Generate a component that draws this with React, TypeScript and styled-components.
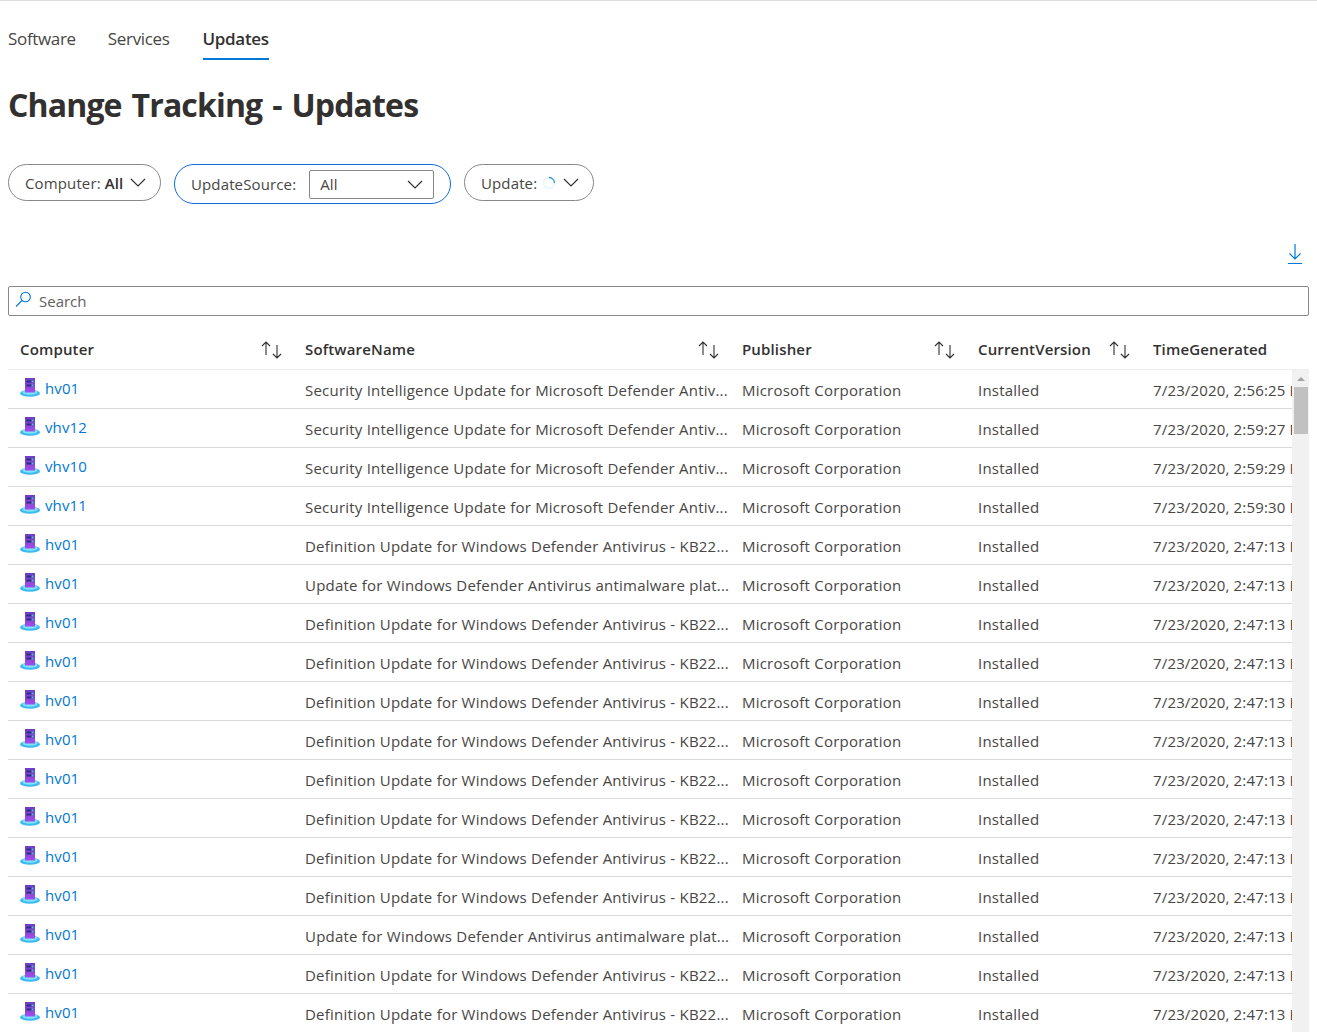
import styled, { createGlobalStyle } from "styled-components";

const GlobalStyle = createGlobalStyle`
  html, body {
    margin: 0;
    padding: 0;
    height: 100%;
    overflow: hidden;
    background: #fff;
  }
  body {
    font-family: "Open Sans", "Noto Sans", sans-serif;
    color: #323130;
  }
`;

const Page = styled.div`
  height: 1032px;
  overflow: hidden;
  box-sizing: border-box;
  border-top: 1px solid #dcdcdc;
  padding: 0 8px;
  display: flex;
  flex-direction: column;
`;

const Tabs = styled.nav`
  display: flex;
  gap: 32px;
  height: 59px;
  box-sizing: border-box;
`;

const Tab = styled.div<{ $active?: boolean }>`
  box-sizing: border-box;
  height: 59px;
  padding-top: 26px;
  margin-left: ${(p) => (p.$active ? "1px" : "0")};
  font-size: 17px;
  line-height: 24px;
  letter-spacing: -0.33px;
  color: ${(p) => (p.$active ? "#323130" : "#484644")};
  font-weight: ${(p) => (p.$active ? 560 : 400)};
  border-bottom: ${(p) => (p.$active ? "2px solid #0078d4" : "none")};
`;

const Title = styled.h1`
  margin: 23px 0 0;
  font-size: 32px;
  line-height: 44px;
  font-weight: 700;
  letter-spacing: -0.85px;
  word-spacing: 2.4px;
  color: #323130;
`;

const Filters = styled.div`
  display: flex;
  align-items: flex-start;
  gap: 13px;
  margin-top: 37px;
`;

const Pill = styled.div<{ $focused?: boolean; $width: number }>`
  box-sizing: border-box;
  display: flex;
  align-items: center;
  width: ${(p) => p.$width}px;
  height: ${(p) => (p.$focused ? 40 : 37)}px;
  padding-left: 16px;
  border-radius: 20px;
  border: 1px solid ${(p) => (p.$focused ? "#0f6cd6" : "#8a8886")};
  font-size: 15px;
  letter-spacing: 0.13px;
  color: #484644;
`;

const PillValue = styled.b`
  margin-left: 4px;
  font-weight: 600;
  color: #323130;
`;

const PillChevron = styled.svg`
  margin-left: 7px;
  flex: none;
`;

const LoadingSpinner = styled.svg`
  margin-left: 5px;
  flex: none;
`;

const InnerSelect = styled.div`
  box-sizing: border-box;
  display: flex;
  align-items: center;
  justify-content: space-between;
  width: 125px;
  height: 29px;
  margin-left: 13px;
  padding: 0 10px 0 10px;
  border: 1px solid #8a8886;
  border-radius: 2px;
  color: #484644;
`;

const ToolRow = styled.div`
  display: flex;
  justify-content: flex-end;
  height: 24px;
  margin-top: 39px;
  padding-right: 6px;
`;

const SearchBox = styled.div`
  box-sizing: border-box;
  display: flex;
  align-items: center;
  gap: 7px;
  height: 30px;
  margin-top: 19px;
  padding-left: 6px;
  border: 1px solid #8a8886;
  border-radius: 2px;
  font-size: 15px;
  color: #605e5c;
`;

const SearchIcon = styled.svg`
  margin-top: -3px;
  flex: none;
`;

const TableArea = styled.div`
  display: grid;
  grid-template-columns: 1284px 17px;
  grid-template-rows: 54px 1fr;
  flex: 1;
  min-height: 0;
`;

const columns = "285px 437px 236px 175px 151px";

const HeaderRow = styled.div`
  grid-column: 1 / 3;
  display: grid;
  grid-template-columns: ${columns};
  box-sizing: border-box;
  height: 54px;
  padding-top: 13px;
  align-items: center;
  border-bottom: 1px solid #eeeeee;
`;

const HeaderCell = styled.div`
  display: flex;
  align-items: center;
  justify-content: space-between;
  padding: 0 10px 0 12px;
  font-size: 15px;
  font-weight: 560;
  letter-spacing: 0.15px;
  color: #323130;
`;

const SortGlyph = styled.svg`
  margin-top: 1px;
  flex: none;
`;

const Rows = styled.div`
  overflow: hidden;
`;

const Row = styled.div`
  display: grid;
  grid-template-columns: ${columns};
  box-sizing: border-box;
  height: 39px;
  border-bottom: 1px solid #d9d9d9;
  font-size: 15px;
  letter-spacing: 0.22px;
  color: #484644;
`;

const Cell = styled.div`
  padding: 2px 0 0 12px;
  line-height: 37px;
  white-space: nowrap;
  overflow: hidden;
`;

const TimeCell = styled(Cell)`
  letter-spacing: 0.16px;
`;

const ComputerCell = styled.div`
  display: flex;
  align-items: flex-start;
  gap: 5px;
  padding: 5px 0 0 12px;
  font-size: 15px;
  letter-spacing: 0.1px;
  line-height: 26px;
  color: #0078d4;
`;

const ServerGlyph = styled.svg`
  margin-top: 3px;
  flex: none;
`;

const Scrollbar = styled.div`
  display: flex;
  flex-direction: column;
  align-items: center;
  background: #f1f1f1;
`;

const ScrollArrow = styled.div`
  width: 0;
  height: 0;
  margin-top: 7px;
  border-left: 4px solid transparent;
  border-right: 4px solid transparent;
  border-bottom: 4px solid #a3a3a3;
`;

const ScrollThumb = styled.div`
  width: 14px;
  height: 47px;
  margin-top: 6px;
  background: #c1c1c1;
`;

const Chevron = () => (
  <svg width="16" height="9" viewBox="0 0 16 9" fill="none" stroke="#323130" strokeWidth="1.2">
    <path d="M1 1l7 7 7-7" />
  </svg>
);

const SortIcon = () => (
  <SortGlyph width="22" height="18" viewBox="0 0 22 18" fill="none" stroke="#323130" strokeWidth="1.1">
    <path d="M5 14V1M1 5l4-4 4 4M16 4v13M12 13l4 4 4-4" />
  </SortGlyph>
);

const ServerIcon = () => (
  <ServerGlyph width="20" height="19" viewBox="0 0 20 19">
    <defs>
      <linearGradient id="tower" x1="0" y1="0" x2="0" y2="1">
        <stop offset="0" stopColor="#6a3fc6" />
        <stop offset="1" stopColor="#a44ce8" />
      </linearGradient>
    </defs>
    <ellipse cx="10" cy="15.2" rx="10" ry="3.6" fill="#3db9f2" />
    <ellipse cx="10" cy="14.2" rx="7.5" ry="2.5" fill="#7fe3fb" />
    <rect x="5" y="0" width="10" height="14.5" fill="url(#tower)" />
    <rect x="6.5" y="2.5" width="7" height="2" fill="#2f2c80" />
    <rect x="6.5" y="6.5" width="7" height="2" fill="#2f2c80" />
    <rect x="11.5" y="2.5" width="2" height="2" fill="#57b7ee" />
    <rect x="11.5" y="6.5" width="2" height="2" fill="#57b7ee" />
  </ServerGlyph>
);

const defUpdate = "Definition Update for Windows Defender Antivirus - KB22...";
const secUpdate = "Security Intelligence Update for Microsoft Defender Antiv...";
const platUpdate = "Update for Windows Defender Antivirus antimalware plat...";

const rows: [string, string, string][] = [
  ["hv01", secUpdate, "7/23/2020, 2:56:25 PM"],
  ["vhv12", secUpdate, "7/23/2020, 2:59:27 PM"],
  ["vhv10", secUpdate, "7/23/2020, 2:59:29 PM"],
  ["vhv11", secUpdate, "7/23/2020, 2:59:30 PM"],
  ["hv01", defUpdate, "7/23/2020, 2:47:13 PM"],
  ["hv01", platUpdate, "7/23/2020, 2:47:13 PM"],
  ["hv01", defUpdate, "7/23/2020, 2:47:13 PM"],
  ["hv01", defUpdate, "7/23/2020, 2:47:13 PM"],
  ["hv01", defUpdate, "7/23/2020, 2:47:13 PM"],
  ["hv01", defUpdate, "7/23/2020, 2:47:13 PM"],
  ["hv01", defUpdate, "7/23/2020, 2:47:13 PM"],
  ["hv01", defUpdate, "7/23/2020, 2:47:13 PM"],
  ["hv01", defUpdate, "7/23/2020, 2:47:13 PM"],
  ["hv01", defUpdate, "7/23/2020, 2:47:13 PM"],
  ["hv01", platUpdate, "7/23/2020, 2:47:13 PM"],
  ["hv01", defUpdate, "7/23/2020, 2:47:13 PM"],
  ["hv01", defUpdate, "7/23/2020, 2:47:13 PM"],
];

const headers = ["Computer", "SoftwareName", "Publisher", "CurrentVersion"];

export default function App() {
  return (
    <>
      <GlobalStyle />
      <Page>
        <Tabs>
          <Tab>Software</Tab>
          <Tab>Services</Tab>
          <Tab $active>Updates</Tab>
        </Tabs>
        <Title>Change Tracking - Updates</Title>
        <Filters>
          <Pill $width={153}>
            Computer:<PillValue>All</PillValue>
            <PillChevron width="16" height="9" viewBox="0 0 16 9" fill="none" stroke="#323130" strokeWidth="1.2">
              <path d="M1 1l7 7 7-7" />
            </PillChevron>
          </Pill>
          <Pill $focused $width={277}>
            UpdateSource:
            <InnerSelect>
              All
              <Chevron />
            </InnerSelect>
          </Pill>
          <Pill $width={130}>
            Update:
            <LoadingSpinner width="14" height="14" viewBox="0 0 14 14" fill="none">
              <circle cx="7" cy="7" r="5.5" stroke="#e6f2fb" strokeWidth="1.3" />
              <path d="M7 1.5A5.5 5.5 0 0 1 12.5 7" stroke="#2f96e0" strokeWidth="1.3" />
            </LoadingSpinner>
            <PillChevron width="16" height="9" viewBox="0 0 16 9" fill="none" stroke="#323130" strokeWidth="1.2">
              <path d="M1 1l7 7 7-7" />
            </PillChevron>
          </Pill>
        </Filters>
        <ToolRow>
          <svg width="16" height="22" viewBox="0 0 16 22" fill="none" stroke="#0078d4" strokeWidth="1.2">
            <path d="M8 1v15M2.5 10.5L8 16l5.5-5.5M1 20.5h14" />
          </svg>
        </ToolRow>
        <SearchBox>
          <SearchIcon width="17" height="17" viewBox="0 0 17 17" fill="none" stroke="#0078d4" strokeWidth="1.1">
            <circle cx="10.5" cy="6" r="4.8" />
            <path d="M7 9.5L1 15.5" />
          </SearchIcon>
          Search
        </SearchBox>
        <TableArea>
          <HeaderRow>
            {headers.map((h) => (
              <HeaderCell key={h}>
                {h}
                <SortIcon />
              </HeaderCell>
            ))}
            <HeaderCell>TimeGenerated</HeaderCell>
          </HeaderRow>
          <Rows>
            {rows.map(([computer, name, time], i) => (
              <Row key={i}>
                <ComputerCell>
                  <ServerIcon />
                  {computer}
                </ComputerCell>
                <Cell>{name}</Cell>
                <Cell>Microsoft Corporation</Cell>
                <Cell>Installed</Cell>
                <TimeCell>{time}</TimeCell>
              </Row>
            ))}
          </Rows>
          <Scrollbar>
            <ScrollArrow />
            <ScrollThumb />
          </Scrollbar>
        </TableArea>
      </Page>
    </>
  );
}
